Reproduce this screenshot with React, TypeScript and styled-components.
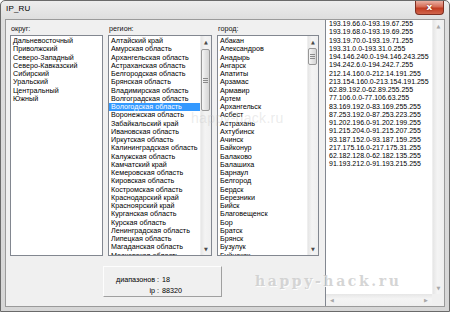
import styled, { createGlobalStyle } from 'styled-components'

const okrugs = [
  'Дальневосточный',
  'Приволжский',
  'Северо-Западный',
  'Северо-Кавказский',
  'Сибирский',
  'Уральский',
  'Центральный',
  'Южный',
]

const regions = [
  'Алтайский край',
  'Амурская область',
  'Архангельская область',
  'Астраханская область',
  'Белгородская область',
  'Брянская область',
  'Владимирская область',
  'Волгоградская область',
  'Вологодская область',
  'Воронежская область',
  'Забайкальский край',
  'Ивановская область',
  'Иркутская область',
  'Калининградская область',
  'Калужская область',
  'Камчатский край',
  'Кемеровская область',
  'Кировская область',
  'Костромская область',
  'Краснодарский край',
  'Красноярский край',
  'Курганская область',
  'Курская область',
  'Ленинградская область',
  'Липецкая область',
  'Магаданская область',
  'Московская область',
]

const cities = [
  'Абакан',
  'Александров',
  'Анадырь',
  'Ангарск',
  'Апатиты',
  'Арзамас',
  'Армавир',
  'Артем',
  'Архангельск',
  'Асбест',
  'Астрахань',
  'Ахтубинск',
  'Ачинск',
  'Байконур',
  'Балаково',
  'Балашиха',
  'Барнаул',
  'Белгород',
  'Бердск',
  'Березники',
  'Бийск',
  'Благовещенск',
  'Бор',
  'Братск',
  'Брянск',
  'Бузулук',
  'Буйнакск',
]

const ranges = [
  '193.19.66.0-193.19.67.255',
  '193.19.68.0-193.19.69.255',
  '193.19.70.0-193.19.71.255',
  '193.31.0.0-193.31.0.255',
  '194.146.240.0-194.146.243.255',
  '194.242.6.0-194.242.7.255',
  '212.14.160.0-212.14.191.255',
  '213.154.160.0-213.154.191.255',
  '62.89.192.0-62.89.255.255',
  '77.106.0.0-77.106.63.255',
  '83.169.192.0-83.169.255.255',
  '87.253.192.0-87.253.223.255',
  '91.202.196.0-91.202.199.255',
  '91.215.204.0-91.215.207.255',
  '93.187.152.0-93.187.159.255',
  '217.175.16.0-217.175.31.255',
  '62.182.128.0-62.182.135.255',
  '91.193.212.0-91.193.215.255',
]

const GlobalStyle = createGlobalStyle`
  html, body {
    margin: 0;
    padding: 0;
    background: #fff;
  }
  body {
    font-family: 'Liberation Sans', Arial, sans-serif;
    color: #000;
  }
  * {
    box-sizing: border-box;
  }
`

const Window = styled.div`
  position: relative;
  width: 450px;
  height: 312px;
  display: flex;
  flex-direction: column;
  padding: 0 4px 4px 4px;
  border: 1px solid #6a6a6a;
  border-radius: 5px 5px 0 0;
  background: linear-gradient(#ededed, #dedede 18px, #d6d6d6);
  overflow: hidden;
`

const TitleBar = styled.div`
  height: 18px;
  display: flex;
  align-items: flex-start;
  padding-left: 1px;

  .title {
    margin-top: 3px;
    font-size: 8px;
    line-height: 10px;
    letter-spacing: 0.2px;
  }
`

const CloseButton = styled.div`
  margin-left: auto;
  margin-right: 1px;
  width: 29px;
  height: 14px;
  display: flex;
  align-items: center;
  justify-content: center;
  border: 1px solid #7e2f22;
  border-top: none;
  border-radius: 0 0 4px 4px;
  background: linear-gradient(#eab0a3, #d56b55 45%, #c13c22 55%, #d0654c);
  color: #fff;
  font-family: 'DejaVu Sans', sans-serif;
  font-weight: bold;
  font-size: 9px;
  line-height: 1;
  text-shadow: 0 0 2px #6a1a0c;
`

const Client = styled.div`
  flex: 1;
  display: flex;
  border: 1px solid #9a9a9a;
  background: #f0f0f0;
  min-height: 0;
`

const LeftPanel = styled.div`
  flex: 0 0 319px;
  display: flex;
  flex-direction: column;
  padding: 4px 0 0 4px;
`

const Columns = styled.div`
  display: grid;
  grid-template-columns: 93px 104px 102px;
  grid-template-rows: 11px 221px;
  column-gap: 5px;
`

const Label = styled.div`
  font-size: 7.2px;
  line-height: 8px;
  padding: 1px 0 0 1px;
  color: #111;
`

const ListBox = styled.div`
  display: flex;
  border: 1px solid #828790;
  background: #fff;
  overflow: hidden;
`

const Items = styled.div`
  flex: 1;
  min-width: 0;
  padding-top: 1px;
`

const Item = styled.div<{ $selected?: boolean }>`
  height: 8.25px;
  line-height: 8.25px;
  font-size: 7.2px;
  padding-left: 2px;
  white-space: nowrap;
  overflow: hidden;
  background: ${(p) => (p.$selected ? '#3399ff' : 'transparent')};
  color: ${(p) => (p.$selected ? '#fff' : '#000')};
`

const VScroll = styled.div<{ $muted?: boolean }>`
  flex: 0 0 11px;
  display: flex;
  flex-direction: column;
  background: linear-gradient(90deg, #e6e6e6, #f4f4f4 40%, #efefef);
  border-left: 1px solid #efefef;
  color: ${(p) => (p.$muted ? '#a8a8a8' : '#4a4a4a')};
`

const Arrow = styled.div`
  flex: 0 0 12px;
  display: flex;
  align-items: center;
  justify-content: center;
  font-size: 5px;
  line-height: 1;
  font-family: 'DejaVu Sans', sans-serif;
`

const Track = styled.div`
  flex: 1;
  position: relative;
`

const Thumb = styled.div<{ $top: number; $height: number }>`
  position: absolute;
  left: 0;
  right: 1px;
  top: ${(p) => p.$top}px;
  height: ${(p) => p.$height}px;
  border: 1px solid #979797;
  border-radius: 2px;
  background: linear-gradient(90deg, #f6f6f6, #e4e4e4 50%, #d6d6d6);
  display: flex;
  align-items: center;
  justify-content: center;

  span {
    width: 5px;
    height: 5px;
    border-top: 1px solid #8a8a8a;
    border-bottom: 1px solid #8a8a8a;
    position: relative;

    &::after {
      content: '';
      position: absolute;
      left: 0;
      right: 0;
      top: 1px;
      border-top: 1px solid #8a8a8a;
    }
  }
`

const InfoPanel = styled.div`
  margin: 10px 0 0 93px;
  width: 119px;
  height: 31px;
  border: 1px solid;
  border-color: #fdfdfd #a0a0a0 #a0a0a0 #fdfdfd;
  display: grid;
  grid-template-columns: 55px auto;
  align-content: start;
  padding-top: 8px;
  font-size: 7.2px;
  line-height: 10.5px;

  .key {
    text-align: right;
  }

  .value {
    padding-left: 3px;
  }
`

const Memo = styled.div`
  flex: 1;
  display: grid;
  grid-template-columns: 1fr 12px;
  grid-template-rows: 1fr 12px;
  border-left: 1px solid #828790;
  background: #fff;
  min-width: 0;
`

const MemoText = styled.div`
  padding: 0 0 0 3px;
  font-size: 7px;
  line-height: 8.25px;
  white-space: nowrap;
  overflow: hidden;
`

const HScroll = styled.div`
  display: flex;
  background: linear-gradient(#e6e6e6, #f4f4f4 40%, #efefef);
  color: #a8a8a8;

  ${Arrow} {
    flex: 0 0 12px;
  }
`

const Corner = styled.div`
  background: #f0f0f0;
`

const Watermark = styled.div<{ $serif?: boolean }>`
  position: absolute;
  pointer-events: none;
  white-space: nowrap;
  color: ${(p) => (p.$serif ? 'rgba(200, 200, 200, 0.75)' : 'rgba(190, 190, 190, 0.3)')};
  font-family: ${(p) => (p.$serif ? "'DejaVu Serif', serif" : "'Liberation Sans', sans-serif")};
  font-weight: ${(p) => (p.$serif ? 'bold' : 'normal')};
  font-size: 14px;
  letter-spacing: ${(p) => (p.$serif ? '2.6px' : '0.3px')};
  text-shadow: ${(p) => (p.$serif ? '1px 1px 0 rgba(255,255,255,0.9)' : 'none')};
`

function Scrollbar({ thumbTop, thumbHeight }: { thumbTop: number; thumbHeight: number }) {
  return (
    <VScroll>
      <Arrow>▲</Arrow>
      <Track>
        <Thumb $top={thumbTop} $height={thumbHeight}>
          <span />
        </Thumb>
      </Track>
      <Arrow>▼</Arrow>
    </VScroll>
  )
}

export default function App() {
  return (
    <>
      <GlobalStyle />
      <Window>
        <TitleBar>
          <span className="title">IP_RU</span>
          <CloseButton>x</CloseButton>
        </TitleBar>

        <Client>
          <LeftPanel>
            <Columns>
              <Label>округ:</Label>
              <Label>регион:</Label>
              <Label>город:</Label>

              <ListBox>
                <Items>
                  {okrugs.map((name) => (
                    <Item key={name}>{name}</Item>
                  ))}
                </Items>
              </ListBox>

              <ListBox>
                <Items>
                  {regions.map((name) => (
                    <Item key={name} $selected={name === 'Вологодская область'}>
                      {name}
                    </Item>
                  ))}
                </Items>
                <Scrollbar thumbTop={1} thumbHeight={62} />
              </ListBox>

              <ListBox>
                <Items>
                  {cities.map((name) => (
                    <Item key={name}>{name}</Item>
                  ))}
                </Items>
                <Scrollbar thumbTop={0} thumbHeight={17} />
              </ListBox>
            </Columns>

            <InfoPanel>
              <span className="key">диапазонов :</span>
              <span className="value">18</span>
              <span className="key">ip :</span>
              <span className="value">88320</span>
            </InfoPanel>
          </LeftPanel>

          <Memo>
            <MemoText>
              {ranges.map((r) => (
                <div key={r}>{r}</div>
              ))}
            </MemoText>
            <VScroll $muted>
              <Arrow>▲</Arrow>
              <Track />
              <Arrow>▼</Arrow>
            </VScroll>
            <HScroll>
              <Arrow>◀</Arrow>
              <Track />
              <Arrow>▶</Arrow>
            </HScroll>
            <Corner />
          </Memo>
        </Client>

        <Watermark style={{ left: 190, top: 109 }}>happy-hack.ru</Watermark>
        <Watermark $serif style={{ left: 254, top: 272 }}>
          happy-hack.ru
        </Watermark>
      </Window>
    </>
  )
}
